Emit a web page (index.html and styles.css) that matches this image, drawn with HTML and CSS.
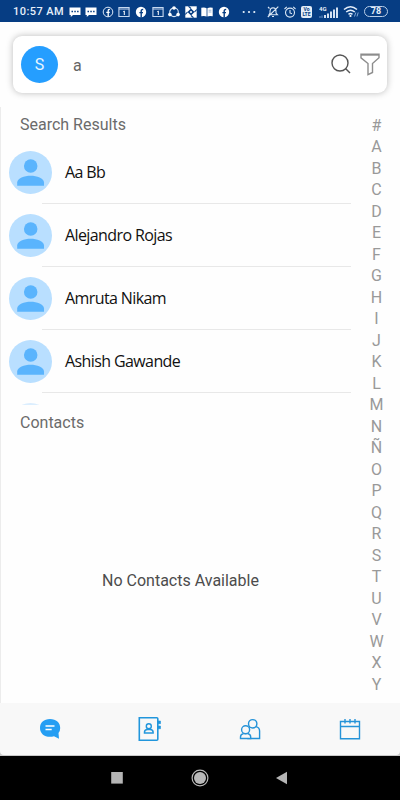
FILE: index.html
```html
<!DOCTYPE html>
<html lang="en">
<head>
<title>Contacts</title>
<meta charset="utf-8">
<meta name="viewport" content="width=device-width, initial-scale=1">
<link rel="stylesheet" href="styles.css">
</head>
<body>

<!-- shared shapes -->
<svg class="defs">
  <symbol id="person" viewBox="0 0 42 42">
    <circle cx="21" cy="21" r="21" fill="#b9dfff"/>
    <circle cx="21.2" cy="14.6" r="6.6" fill="#5ab4fd"/>
    <path d="M8 34v-3.2c0-4.2 7-6.6 13.1-6.6S34.2 26.600 34.200 30.800V34z" fill="#5ab4fd"/>
  </symbol>
  <symbol id="sms" viewBox="0 0 12 12">
    <path d="M.5 1.500h11v7.500H4L1.800 11V9H.5z" fill="#fff"/>
    <path d="M2.500 5.500h1.500M5.300 5.500h1.500M8.100 5.500h1.500" stroke="#063d83" stroke-width="1.400"/>
  </symbol>
  <symbol id="date" viewBox="0 0 12 12">
    <path d="M.9 1.500h10.200v9H.9zM.9 3h10.200" fill="none" stroke="#c5d8f0" stroke-width="1.100"/>
    <path d="M5.300 5.600l1-.6v4" fill="none" stroke="#fff"/>
  </symbol>
</svg>

<div class="status">
  <span class="time">10:57 AM</span>
  <div class="notifs">
    <svg><use href="#sms"/></svg>
    <svg><use href="#sms"/></svg>
    <svg viewBox="0 0 12 12"><circle cx="6" cy="6" r="4.800" fill="none" stroke="#dce8f7"/><path d="M6.200 10.500V4.700q0-1.500 1.700-1.300M4.300 6.300h3.400" fill="none" stroke="#fff" stroke-width="1.300"/></svg>
    <svg><use href="#date"/></svg>
    <svg viewBox="0 0 12 12"><circle cx="6" cy="6" r="5.200" fill="#fff"/><path d="M6.200 11.500V5q0-1.700 2-1.500M4.400 6.600h3.600" fill="none" stroke="#063d83" stroke-width="1.400"/></svg>
    <svg><use href="#date"/></svg>
    <svg viewBox="0 0 12 12"><circle cx="6" cy="6.300" r="4.300" fill="none" stroke="#dce8f7" stroke-width="1.100"/><circle cx="6" cy="2" r="1.800" fill="#fff"/><circle cx="1.900" cy="8.600" r="1.800" fill="#fff"/><circle cx="10.100" cy="8.600" r="1.800" fill="#fff"/></svg>
    <svg viewBox="0 0 12 12"><path d="M.3.300h11.400v11.400H.3z" fill="#fff"/><path d="M6 2.500L9.500 6 6 9.500 2.500 6z" fill="#063d83"/><path d="M6 2.500L3.500.3M9.500 6l2.200-2.500M6 9.500l2.500 2.200M2.500 6L.3 8.500" stroke="#063d83" stroke-width="1.100"/><circle cx="6" cy="6" r="1" fill="#fff"/></svg>
    <svg viewBox="0 0 12 12"><path d="M.3 1.800Q3.500.8 5.600 2.200v8.200Q3.300 9.500.3 10.300zM11.700 1.800Q8.500.8 6.400 2.200v8.200q2.300-.9 5.300-.1z" fill="#fff"/><path d="M7.600 4.200h2.800M7.600 6h2.800" stroke="#7095c4" stroke-width=".7"/></svg>
    <svg viewBox="0 0 12 12"><circle cx="6" cy="6" r="5.200" fill="#fff"/><path d="M6.200 11.500V5q0-1.700 2-1.500M4.400 6.600h3.600" fill="none" stroke="#063d83" stroke-width="1.400"/></svg>
  </div>
  <svg class="dots" viewBox="0 0 14 12"><circle cx="1.700" cy="6" r="1.100"/><circle cx="7" cy="6" r="1.100"/><circle cx="12.300" cy="6" r="1.100"/></svg>
  <div class="system">
    <svg class="sys" viewBox="0 0 12 12"><path d="M2 8.800h8.500L9 7V5Q9 2 6 1.800 3.200 2 3 5v2zM5 10.500h2M.8 11L11.300.700M1 1l1.500 1.500"/></svg>
    <svg class="sys" viewBox="0 0 12 12"><circle cx="6" cy="6.600" r="4.500"/><path d="M6 4v3l2 .8M.5 3L2.800.900M11.500 3L9.200.900"/></svg>
    <span class="volte"><b>Vo</b><b>LTE</b></span>
    <svg class="signal" viewBox="0 0 19 14"><text x="0" y="5.500">4G</text><path d="M1 13v-2M3 13v-2.500" stroke="#6e94c4"/><path d="M6 13v-3M9 13V8.500M12 13V6.500M15 13V4.500M18 13V2.500" stroke="#dfeaf8" stroke-width="1.900"/></svg>
    <svg class="wifi" viewBox="0 0 16 13"><path d="M1 4.500Q7.500-1 14 4.500M3.200 7q4.300-3.500 8.600 0M5.500 9.300q2-1.500 4 0" fill="none" stroke="#e4eefa" stroke-width="1.500"/><circle cx="7.500" cy="11" r="1.100" fill="#fff"/><path d="M11.500 11.500l1.300-4M14 11.500l1.200-4" stroke="#84a9d7"/></svg>
    <span class="battery">78</span>
  </div>
</div>

<header>
  <div class="search">
    <span class="me">S</span>
    <span class="query">a</span>
    <svg class="glass" viewBox="0 0 20 20"><circle cx="9" cy="9" r="8"/><path d="M14.500 14.500L19 19"/></svg>
    <svg class="funnel" viewBox="0 0 20 23"><path d="M1 1.200h18v3.600l-6.500 5.700v9L8 21.700V10.500L1 4.800z"/><path d="M1 2h18"/></svg>
  </div>
</header>

<section>
  <article>
    <h2 class="results_title">Search Results</h2>
    <ul class="results">
      <li><svg><use href="#person"/></svg><span class="name">Aa Bb</span></li>
      <li><svg><use href="#person"/></svg><span class="name">Alejandro Rojas</span></li>
      <li><svg><use href="#person"/></svg><span class="name">Amruta Nikam</span></li>
      <li><svg><use href="#person"/></svg><span class="name">Ashish Gawande</span></li>
      <li><svg><use href="#person"/></svg></li>
    </ul>
    <h2 class="contacts_title">Contacts</h2>
    <p class="empty">No Contacts Available</p>
  </article>
  <ul class="letters">
    <li>#</li><li>A</li><li>B</li><li>C</li><li>D</li><li>E</li><li>F</li><li>G</li><li>H</li>
    <li>I</li><li>J</li><li>K</li><li>L</li><li>M</li><li>N</li><li>Ñ</li><li>O</li><li>P</li>
    <li>Q</li><li>R</li><li>S</li><li>T</li><li>U</li><li>V</li><li>W</li><li>X</li><li>Y</li>
  </ul>
</section>

<nav>
  <div class="tabs">
    <svg class="tab" viewBox="0 0 24 26"><path d="M12 3C5.800 3 2 6.700 2 11.900s4 8.900 10 8.900q2 0 4-.5l5 2.500-.5-5.700q1.700-2.200 1.700-5.200C22.200 6.700 18.200 3 12 3z" fill="#259ef3"/><path d="M7.500 10h9M7.500 13.500h6.200" stroke="#fff" stroke-width="1.500"/></svg>
    <svg class="tab" viewBox="0 0 24 26"><path d="M1.300 1.800h17.500q1 0 1 1v20.400q0 1-1 1H1.300z" fill="none" stroke="#2196dc" stroke-width="1.600"/><path d="M20 5h2.500v2.700H20M20 10h2.500v2.700H20" fill="#2196dc" stroke="#2196dc" stroke-width=".6"/><circle cx="10.800" cy="10.300" r="2.500" fill="none" stroke="#2196dc" stroke-width="1.400"/><path d="M6.500 17v-1q0-2.300 3-2.600h2.600q3 .3 3 2.600v1z" fill="none" stroke="#2196dc" stroke-width="1.500"/></svg>
    <svg class="tab" viewBox="0 0 24 26"><g fill="#f8f8f8" stroke="#2593d8" stroke-width="1.400"><path d="M10 22.500V15q0-3.500 3.500-4.400h4.500q3.600 1 3.600 4.400v7.500z"/><circle cx="14.700" cy="7.800" r="4.200"/><path d="M2.500 22.500v-1.400q0-3 3-3.500h4.200q3 .5 3 3.500v1.400z"/><circle cx="7.600" cy="13.800" r="4"/></g></svg>
    <svg class="tab" viewBox="0 0 24 26"><path d="M2.500 5.500h19v17.200h-19zM2.500 10.500h19M7 3v4.500M12 3v4.500M17 3v4.500" fill="none" stroke="#2593d8" stroke-width="1.400"/></svg>
  </div>
</nav>

<footer>
  <svg viewBox="0 0 18 18"><path d="M3.200 3h11.600v11.600H3.200z" fill="#b5b5b5"/></svg>
  <svg viewBox="0 0 18 18"><circle cx="9" cy="9" r="7.900" fill="none" stroke="#b8b8b8" stroke-width="1.200"/><circle cx="9" cy="9" r="6" fill="#b8b8b8"/></svg>
  <svg viewBox="0 0 18 18"><path d="M2 9l11-6.200v12.400z" fill="#b5b5b5"/></svg>
</footer>

</body>
</html>
```

FILE: styles.css
```css
* {
  box-sizing: border-box;
}

body {
  margin: 0;
  width: 400px;
  height: 800px;
  display: flex;
  flex-direction: column;
  overflow: hidden;
  background: #fefefe;
  font-family: Roboto, sans-serif;
}

ul, h2, p {
  margin: 0;
  padding: 0;
  list-style-type: none;
}

svg {
  display: block;
  flex-shrink: 0;
}

.defs {
  display: none;
}

/* Android status bar */
.status {
  display: flex;
  align-items: center;
  height: 22px;
  padding: 1px 12px 0 13px;
  background: #063d83;
  color: #e7f0fa;
}

.time {
  width: 57px;
  font-size: 11px;
  font-weight: 500;
  letter-spacing: 0.450px;
  white-space: nowrap;
}

.notifs {
  display: flex;
  gap: 4.6px;
}

.notifs svg {
  width: 12px;
  height: 12px;
}

.dots {
  width: 14px;
  height: 12px;
  margin-left: 12px;
  fill: #e7f0fa;
}

.system {
  display: flex;
  align-items: center;
  margin-left: 11px;
}

.sys {
  width: 12px;
  height: 12px;
  margin-right: 5px;
  fill: none;
  stroke: #dbe7f5;
  stroke-width: 1.100;
}

.volte {
  display: flex;
  flex-direction: column;
  width: 11px;
  height: 12px;
  padding-top: 1px;
  border-radius: 2px;
  background: #e3edf8;
  color: #063d83;
  font-size: 5px;
  line-height: 5px;
  text-align: center;
}

.signal {
  width: 19px;
  height: 14px;
  margin-left: 7px;
  font-size: 6px;
  font-weight: 700;
  fill: #e7f0fa;
}

.wifi {
  width: 16px;
  height: 13px;
  margin-left: 5px;
}

.battery {
  width: 24px;
  height: 11px;
  margin-left: 5px;
  border: 1px solid #b9cee8;
  border-radius: 6px;
  font-size: 9px;
  font-weight: 700;
  line-height: 9px;
  text-align: center;
}

/* search box */
header {
  height: 85px;
  padding: 14px 13px 0;
}

.search {
  display: flex;
  align-items: center;
  height: 57px;
  padding: 0 7px 0 8px;
  border-radius: 9px;
  background: #fff;
  box-shadow: 0 0 7px rgba(0, 0, 0, 0.27);
}

.me {
  width: 37px;
  height: 37px;
  border-radius: 50%;
  background: #259eff;
  color: #e8f5ff;
  font-size: 16px;
  line-height: 38px;
  text-align: center;
}

.query {
  flex: 1;
  padding: 2px 0 0 15px;
  color: #666;
  font-size: 16px;
}

.glass {
  width: 20px;
  height: 20px;
  margin: -1px 9px 0 0;
  fill: none;
  stroke: #555;
  stroke-width: 1.400;
}

.funnel {
  width: 20px;
  height: 23px;
  margin-top: -1px;
  fill: none;
  stroke: #8d8d8d;
  stroke-width: 1.400;
}

/* contact lists */
section {
  display: flex;
  height: 596px;
  border-left: 1px solid #ececec;
}

article {
  width: 351px;
}

h2 {
  padding-left: 19px;
  color: #6b6b6b;
  font-size: 16px;
  font-weight: 400;
}

.results_title {
  height: 34px;
  line-height: 35px;
}

.results {
  height: 264px;
  overflow: hidden;
}

.results li {
  display: flex;
  align-items: center;
  position: relative;
  height: 63px;
  padding-left: 8px;
}

.results li::after {
  content: "";
  position: absolute;
  left: 41px;
  right: 1px;
  bottom: 0;
  height: 1px;
  background: #e8e8e8;
}

.results svg {
  width: 43px;
  height: 43px;
  margin-top: -1px;
}

.results li:last-child svg {
  opacity: 0.5;
}

.name {
  padding: 0 0 2px 13px;
  color: #111;
  font-family: "Open Sans", sans-serif;
  font-size: 16px;
  letter-spacing: -0.6px;
  white-space: nowrap;
}

.contacts_title {
  height: 36px;
  line-height: 36px;
}

.empty {
  padding: 130px 0 0 8px;
  color: #4c4c4c;
  font-size: 16px;
  line-height: 20px;
  text-align: center;
}

/* A-Y index */
.letters {
  width: 48px;
  padding: 8px 0 0 1px;
  color: #999;
  font-size: 16px;
  line-height: 21.480px;
  text-align: center;
}

/* bottom tabs */
nav {
  height: 53px;
  background: #c9c9c9;
}

.tabs {
  display: flex;
  justify-content: space-around;
  height: 52px;
  padding-top: 13px;
  border-radius: 0 0 4px 4px;
  background: #f8f8f8;
}

.tab {
  width: 24px;
  height: 26px;
}

/* Android buttons */
footer {
  display: flex;
  flex: 1;
  justify-content: center;
  gap: 65px;
  padding-top: 13px;
  background: #000;
}

footer svg {
  width: 18px;
  height: 18px;
}
```
